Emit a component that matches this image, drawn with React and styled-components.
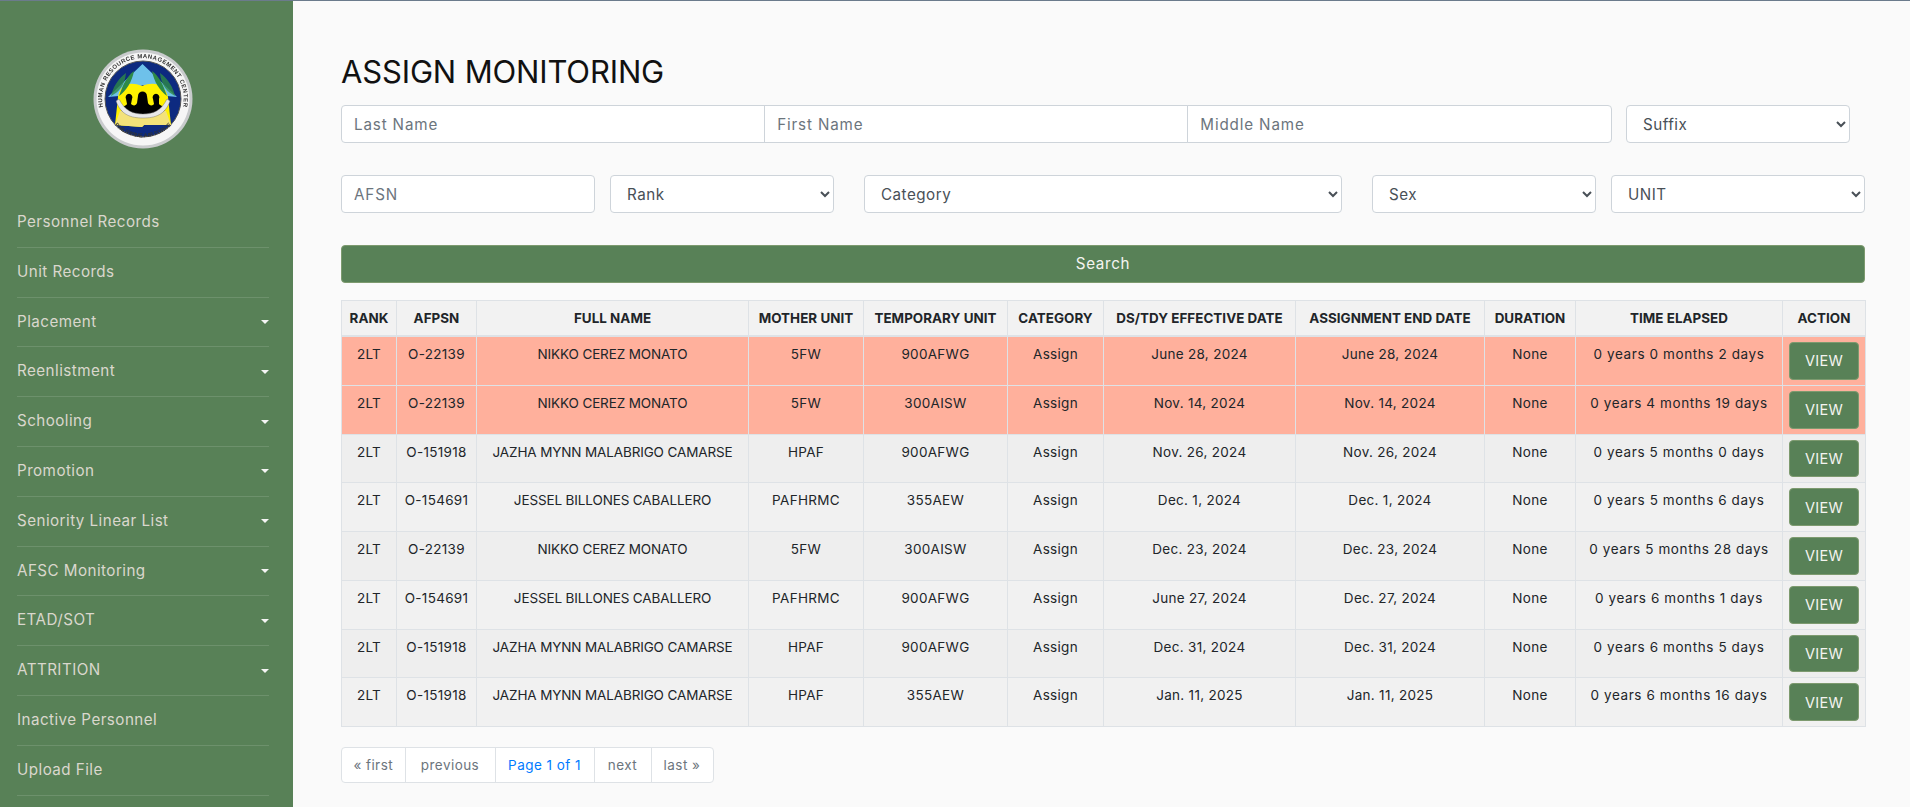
import React from "react";
import styled, { createGlobalStyle } from "styled-components";

const FONT = `"Inter", "Open Sans", "Liberation Sans", sans-serif`;

const Global = createGlobalStyle`
  * { box-sizing: border-box; }
  html, body { margin: 0; padding: 0; height: 100%; overflow: hidden; }
  body { background: #fafafa; font-family: ${FONT}; color: #212529; }
  #root { height: 100%; }
`;

const Page = styled.div`
  display: flex;
  height: 807px;
  border-top: 1px solid #6b7b8c;
  overflow: hidden;
`;
const Sidebar = styled.aside`
  flex: 0 0 293px;
  background: #588157;
  padding: 48px 24px 0 17px;
`;
const LogoWrap = styled.div`
  display: flex;
  justify-content: center;
  margin-bottom: 49px;
`;
const Logo = styled.svg`
  width: 100px;
  height: 100px;
  display: block;
`;
const Nav = styled.ul`
  list-style: none;
  margin: 0;
  padding: 0;
`;
const NavItem = styled.li`
  position: relative;
  border-bottom: 1px solid #6d916c;
  padding: 10px 0;
  font-size: 15.2px;
  line-height: 28.8px;
  letter-spacing: 0.45px;
  color: #dad7cd;
`;
const Caret = styled.span`
  position: absolute;
  right: 0;
  top: 50%;
  margin-top: -2px;
  border-top: 4.8px solid #f5f5f5;
  border-left: 4px solid transparent;
  border-right: 4px solid transparent;
`;
const Main = styled.main`
  flex: 1;
  min-width: 0;
  padding: 50px 45px 0 48px;
`;
const Title = styled.h2`
  margin: 0 0 12px;
  font-size: 31px;
  line-height: 42px;
  font-weight: 400;
  letter-spacing: -0.15px;
  color: #111;
`;
const Row = styled.div`
  display: flex;
  height: 38px;
  gap: ${(p) => p.$gap || 0}px;
  margin-bottom: 32px;
`;
const InputGroup = styled.div`
  display: flex;
  flex: 0 0 1270.5px;
`;
const field = `
  height: 38px;
  padding: 6px 12px;
  font-family: ${FONT};
  font-size: 15.2px;
  letter-spacing: 0.5px;
  color: #495057;
  background: #fff;
  border: 1px solid #ced4da;
  outline: none;
  &::placeholder { color: #6c757d; opacity: 1; letter-spacing: 0.85px; }
`;
const GroupInput = styled.input`
  ${field}
  flex: 1;
  min-width: 0;
  border-radius: 0;
  margin-left: -1px;
  &:first-child { margin-left: 0; border-radius: 4px 0 0 4px; }
  &:last-child { border-radius: 0 4px 4px 0; }
`;
const Input = styled.input`
  ${field}
  flex: 0 0 ${(p) => p.$w}px;
  width: ${(p) => p.$w}px;
  border-radius: 4px;
`;
const Select = styled.select`
  ${field}
  flex: 0 0 ${(p) => p.$w}px;
  width: ${(p) => p.$w}px;
  border-radius: 4px;
`;
const SpacedSelect = styled(Select)`
  margin-left: ${(p) => p.$ml}px;
`;
const SearchButton = styled.button`
  display: block;
  width: 100%;
  height: 38px;
  margin: 0 0 16.5px;
  padding: 0 0 2px;
  background: #588157;
  border: 1px solid #7d9a6f;
  border-radius: 4px;
  color: #f4f4f0;
  font-family: ${FONT};
  font-size: 15.2px;
  letter-spacing: 0.7px;
`;
const Table = styled.table`
  width: 1524px;
  table-layout: fixed;
  border-collapse: collapse;
  font-size: 13.5px;
`;
const Col = styled.col`
  width: ${(p) => p.$w}px;
`;
const Th = styled.th`
  height: 36px;
  padding: 4px 0;
  background: #f2f2f2;
  border: 1px solid #dee2e6;
  border-bottom: 2px solid #dee2e6;
  font-size: 13.4px;
  line-height: 24px;
  font-weight: 700;
  letter-spacing: 0.05px;
  white-space: nowrap;
  color: #212529;
`;
const Tr = styled.tr`
  background: ${(p) => (p.$alert ? "#ffb09c" : p.$odd ? "#eeeeee" : "#f1f1f1")};
`;
const Td = styled.td`
  padding: 5px 0;
  border: 1px solid #dee2e6;
  text-align: center;
  vertical-align: top;
  line-height: 24px;
  letter-spacing: 0.3px;
  white-space: nowrap;
  color: #212529;
`;
const NameCell = styled(Td)`
  letter-spacing: -0.13px;
`;
const ElapsedCell = styled(Td)`
  letter-spacing: 0.6px;
`;
const ActionCell = styled(Td)`
  padding: 5px 6px;
`;
const ViewButton = styled.button`
  display: block;
  width: 70px;
  height: 37.75px;
  padding: 0;
  background: #588157;
  border: 1px solid #7d9a6f;
  border-radius: 4px;
  color: #f4f4f0;
  font-family: ${FONT};
  font-size: 14.5px;
  letter-spacing: 0.3px;
`;
const Pagination = styled.nav`
  display: inline-flex;
  margin-top: 20px;
  height: 36px;
  background: #fff;
  border: 1px solid #dee2e6;
  border-radius: 4px;
  font-size: 13.5px;
  letter-spacing: 0.45px;
`;
const PageItem = styled.span`
  display: flex;
  align-items: center;
  justify-content: center;
  width: ${(p) => p.$w}px;
  color: ${(p) => (p.$current ? "#007bff" : "#6c757d")};
  & + & { border-left: 1px solid #dee2e6; }
`;

const NAV = [
  ["Personnel Records"],
  ["Unit Records"],
  ["Placement", 1],
  ["Reenlistment", 1],
  ["Schooling", 1],
  ["Promotion", 1],
  ["Seniority Linear List", 1],
  ["AFSC Monitoring", 1],
  ["ETAD/SOT", 1],
  ["ATTRITION", 1],
  ["Inactive Personnel"],
  ["Upload File"],
];
const COLS = [
  ["RANK", 55], ["AFPSN", 80], ["FULL NAME", 272], ["MOTHER UNIT", 115], ["TEMPORARY UNIT", 144],
  ["CATEGORY", 96], ["DS/TDY EFFECTIVE DATE", 192], ["ASSIGNMENT END DATE", 189], ["DURATION", 91],
  ["TIME ELAPSED", 207], ["ACTION", 83],
];
const NIKKO = ["O-22139", "NIKKO CEREZ MONATO", "5FW"];
const JAZHA = ["O-151918", "JAZHA MYNN MALABRIGO CAMARSE", "HPAF"];
const JESSEL = ["O-154691", "JESSEL BILLONES CABALLERO", "PAFHRMC"];
const ROWS = [
  [NIKKO, "900AFWG", "June 28, 2024", "June 28, 2024", "0 years 0 months 2 days", true],
  [NIKKO, "300AISW", "Nov. 14, 2024", "Nov. 14, 2024", "0 years 4 months 19 days", true],
  [JAZHA, "900AFWG", "Nov. 26, 2024", "Nov. 26, 2024", "0 years 5 months 0 days"],
  [JESSEL, "355AEW", "Dec. 1, 2024", "Dec. 1, 2024", "0 years 5 months 6 days"],
  [NIKKO, "300AISW", "Dec. 23, 2024", "Dec. 23, 2024", "0 years 5 months 28 days"],
  [JESSEL, "900AFWG", "June 27, 2024", "Dec. 27, 2024", "0 years 6 months 1 days"],
  [JAZHA, "900AFWG", "Dec. 31, 2024", "Dec. 31, 2024", "0 years 6 months 5 days"],
  [JAZHA, "355AEW", "Jan. 11, 2025", "Jan. 11, 2025", "0 years 6 months 16 days"],
];

const Seal = () => (
  <Logo viewBox="0 0 100 100">
    <defs>
      <path id="sealTop" d="M 10 58 A 40.8 40.8 0 1 1 90 58" />
      <path id="sealBottom" d="M 19 73 A 39 39 0 0 0 81 73" />
      <filter id="soft"><feGaussianBlur stdDeviation="0.4" /></filter>
    </defs>
    <g filter="url(#soft)">
      <circle cx="50" cy="50" r="49.5" fill="#c9cbcd" />
      <circle cx="50" cy="50" r="46.5" fill="#f6f6f6" />
      <circle cx="50" cy="50" r="38" fill="#0b2a80" stroke="#555" strokeWidth="1" />
      <polygon points="49.5,15 84,48 74,47 50,36 26,47 15,48" fill="#6ec1ea" />
      <path d="M25 48 C27 35 37 32 49 37 C61 32 72 35 75 48 L78 76 L51 76 L49 78 L22 76 Z" fill="#fff200" />
      <path d="M22 76 L27 62 L73 62 L78 76 L51 76 L49 78 Z" fill="#f3e27a" />
      <path d="M26 47 C30 36 33 28 41 22 C39 33 33 42 26 47 Z" fill="#2f8a46" />
      <path d="M18 47 C20 38 25 30 33 24 C32 36 26 43 18 47 Z" fill="#2f8a46" opacity="0.8" />
      <path d="M74 47 C70 36 67 28 59 22 C61 33 67 42 74 47 Z" fill="#2f8a46" />
      <path d="M82 47 C80 38 75 30 67 24 C68 36 74 43 82 47 Z" fill="#2f8a46" opacity="0.8" />
      <g transform="translate(0 4)">
        <path d="M28 57 C29 53 33 53 34 51 L33 46 A3.4 3.6 0 1 1 39 46 L38 51 C40 53 43 53 44 50 L45 43 A4.3 4.3 0 1 1 54 43 L55 50 C56 53 60 53 61 51 L60 46 A3.4 3.6 0 1 1 66 46 L66 51 C68 53 71 53 72 57 C64 65 36 65 28 57 Z" fill="#050505" />
      </g>
      <path d="M23 52 C28 66 38 69 50 69 C62 69 72 66 77 52 L74 50 C68 62 60 65 50 65 C40 65 32 62 26 50 Z" fill="#e8e8e8" stroke="#666" strokeWidth="0.4" />
      <text fontFamily="Liberation Sans, sans-serif" fontSize="6" fontWeight="700" letterSpacing="0.45" fill="#333">
        <textPath href="#sealTop" startOffset="50%" textAnchor="middle">HUMAN RESOURCE MANAGEMENT CENTER</textPath>
      </text>
      <text fontFamily="Liberation Sans, sans-serif" fontSize="5.6" fontWeight="700" fill="#333">
        <textPath href="#sealBottom" startOffset="50%" textAnchor="middle">PHILIPPINE AIR FORCE</textPath>
      </text>
    </g>
  </Logo>
);

export default function App() {
  return (
    <>
      <Global />
      <Page>
        <Sidebar>
          <LogoWrap><Seal /></LogoWrap>
          <Nav>
            {NAV.map(([label, caret]) => (
              <NavItem key={label}>
                {label}
                {caret && <Caret />}
              </NavItem>
            ))}
          </Nav>
        </Sidebar>
        <Main>
          <Title>ASSIGN MONITORING</Title>
          <Row $gap={14.5}>
            <InputGroup>
              <GroupInput placeholder="Last Name" />
              <GroupInput placeholder="First Name" />
              <GroupInput placeholder="Middle Name" />
            </InputGroup>
            <Select $w={224} defaultValue="Suffix"><option>Suffix</option></Select>
          </Row>
          <Row>
            <Input $w={254} placeholder="AFSN" />
            <SpacedSelect $w={224} $ml={15}><option>Rank</option></SpacedSelect>
            <SpacedSelect $w={478} $ml={30}><option>Category</option></SpacedSelect>
            <SpacedSelect $w={224} $ml={30}><option>Sex</option></SpacedSelect>
            <SpacedSelect $w={254} $ml={15}><option>UNIT</option></SpacedSelect>
          </Row>
          <SearchButton>Search</SearchButton>
          <Table>
            <colgroup>
              {COLS.map(([h, w]) => <Col key={h} $w={w} />)}
            </colgroup>
            <thead>
              <tr>{COLS.map(([h]) => <Th key={h}>{h}</Th>)}</tr>
            </thead>
            <tbody>
              {ROWS.map(([person, temp, start, end, elapsed, alert], i) => (
                <Tr key={i} $alert={alert} $odd={i % 2 === 0}>
                  <Td>2LT</Td>
                  <Td>{person[0]}</Td>
                  <NameCell>{person[1]}</NameCell>
                  <Td>{person[2]}</Td>
                  <Td>{temp}</Td>
                  <Td>Assign</Td>
                  <Td>{start}</Td>
                  <Td>{end}</Td>
                  <Td>None</Td>
                  <ElapsedCell>{elapsed}</ElapsedCell>
                  <ActionCell><ViewButton>VIEW</ViewButton></ActionCell>
                </Tr>
              ))}
            </tbody>
          </Table>
          <Pagination>
            <PageItem $w={62.5}>« first</PageItem>
            <PageItem $w={90}>previous</PageItem>
            <PageItem $w={99} $current>Page 1 of 1</PageItem>
            <PageItem $w={57}>next</PageItem>
            <PageItem $w={62}>last »</PageItem>
          </Pagination>
        </Main>
      </Page>
    </>
  );
}
